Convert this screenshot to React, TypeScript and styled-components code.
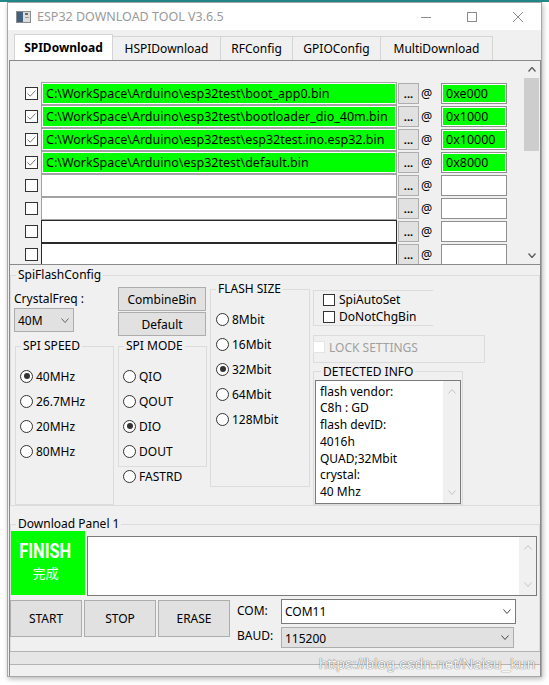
import React from "react";
import styled, { createGlobalStyle } from "styled-components";

const GlobalStyle = createGlobalStyle`
  * { box-sizing: border-box; }
  html, body { margin: 0; padding: 0; background: #ffffff; }
  body {
    font-family: "Noto Sans", "Noto Sans CJK SC", sans-serif;
    font-size: 12px;
    color: #000;
  }
`;

const Page = styled.div`
  position: relative;
  width: 549px;
  height: 685px;
  overflow: hidden;
  background: #fff;
`;

const TopStrip = styled.div`
  height: 2px;
  background: #23898d;
`;

const Window = styled.div`
  margin-left: 7px;
  width: 535px;
  height: 675px;
  border: 1px solid #a7a7a7;
  background: #f0f0f0;
  box-shadow: 1px 2px 5px rgba(0, 0, 0, 0.28);
  display: flex;
  flex-direction: column;
`;

const TitleBar = styled.div`
  height: 27px;
  flex-shrink: 0;
  background: #fff;
  display: flex;
  align-items: center;
  padding-left: 8px;
`;

const TitleText = styled.span`
  flex: 1;
  margin-left: 6px;
  font-size: 12.5px;
  color: #9a9a9a;
`;

const WinButton = styled.div`
  width: 46px;
  height: 27px;
  display: flex;
  align-items: center;
  justify-content: center;
`;

const TabBar = styled.div`
  height: 30px;
  flex-shrink: 0;
  display: flex;
  align-items: flex-end;
  padding-left: 6px;
`;

const Tab = styled.div<{ $active?: boolean; $w: number }>`
  width: ${({ $w }) => $w}px;
  height: ${({ $active }) => ($active ? 26 : 24)}px;
  margin-left: -1px;
  border: 1px solid #d4d4d4;
  border-bottom: none;
  background: ${({ $active }) => ($active ? "#ffffff" : "#f0f0f0")};
  font-weight: ${({ $active }) => ($active ? 700 : 400)};
  display: flex;
  align-items: center;
  justify-content: center;
  padding-bottom: 1px;

  &:first-child {
    margin-left: 0;
  }
`;

const TabPage = styled.div`
  flex: 1;
  margin-left: 1px;
  border: 1px solid #8a8a8a;
  border-bottom: none;
  display: flex;
  flex-direction: column;
  overflow: hidden;
`;

/* file list */

const FileList = styled.div`
  height: 204px;
  flex-shrink: 0;
  border-bottom: 1px solid #8a8a8a;
  display: flex;
  overflow: hidden;
`;

const Rows = styled.div`
  flex: 1;
  padding: 21px 0 0 15px;
  overflow: hidden;
`;

const FileRow = styled.div`
  height: 23px;
  display: flex;
  align-items: center;
`;

const Check = styled.span<{ $size?: number; $faint?: boolean }>`
  width: ${({ $size }) => $size ?? 13}px;
  height: ${({ $size }) => $size ?? 13}px;
  flex-shrink: 0;
  border: 1px solid ${({ $faint }) => ($faint ? "#e4e4e4" : "#333333")};
  background: #fff;
  display: flex;
  align-items: center;
  justify-content: center;
`;

const PathField = styled.div<{ $filled?: boolean; $dark?: boolean }>`
  width: 356px;
  height: 23px;
  margin-left: 3px;
  border: 1px solid ${({ $dark }) => ($dark ? "#2a2a2a" : "#a3a3a3")};
  box-shadow: inset 0 0 0 1px #ffffff;
  background: ${({ $filled }) => ($filled ? "#00ff00" : "#ffffff")};
  padding-left: 4px;
  font-size: 12.5px;
  line-height: 21px;
  white-space: nowrap;
  overflow: hidden;
`;

const DotsButton = styled.div`
  width: 21px;
  height: 21px;
  margin-left: 1px;
  border: 1px solid #adadad;
  background: #e1e1e1;
  font-weight: 700;
  font-size: 11px;
  line-height: 19px;
  text-align: center;
`;

const AtSign = styled.span`
  width: 22px;
  padding-left: 2px;
  font-size: 12.5px;
`;

const AddrField = styled.div<{ $filled?: boolean }>`
  width: 66px;
  height: 21px;
  border: 1px solid #8f8f8f;
  box-shadow: inset 0 0 0 1px #ffffff;
  background: ${({ $filled }) => ($filled ? "#00ff00" : "#ffffff")};
  padding-left: 4px;
  font-size: 12.5px;
  line-height: 19px;
`;

const ScrollBar = styled.div`
  width: 17px;
  flex-shrink: 0;
  display: flex;
  flex-direction: column;
  background: #f0f0f0;
`;

const ScrollArrow = styled.div`
  height: 17px;
  display: flex;
  align-items: center;
  justify-content: center;
`;

const ScrollTrack = styled.div`
  flex: 1;
`;

const ScrollThumb = styled.div`
  height: 73px;
  margin: 0 1px;
  background: #cdcdcd;
`;

/* group boxes */

const Group = styled.fieldset<{
  $mt?: number;
  $ml?: number;
  $w?: number;
  $grow?: boolean;
  $pb?: number;
  $noBottom?: boolean;
}>`
  margin: ${({ $mt }) => $mt ?? 0}px 0 0 ${({ $ml }) => $ml ?? 0}px;
  padding: 0 0 ${({ $pb }) => $pb ?? 0}px 0;
  min-width: 0;
  width: ${({ $w }) => ($w ? `${$w}px` : "auto")};
  flex: ${({ $grow }) => ($grow ? "1" : "none")};
  border: 1px solid #dcdcdc;
  border-bottom: ${({ $noBottom }) => ($noBottom ? "none" : "1px solid #dcdcdc")};
`;

const Legend = styled.legend<{ $ml?: number }>`
  margin-left: ${({ $ml }) => $ml ?? 5}px;
  padding: 0 2px;
  font-size: 12px;
  line-height: 14px;
`;

const Columns = styled.div`
  height: 223px;
  display: flex;
  padding-left: 3px;
`;

const Column = styled.div<{ $w: number; $ml?: number }>`
  width: ${({ $w }) => $w}px;
  margin-left: ${({ $ml }) => $ml ?? 0}px;
  display: flex;
  flex-direction: column;
  align-items: flex-start;
`;

const FieldLabel = styled.div`
  margin-top: 9px;
  line-height: 16px;
`;

const Combo = styled.div<{ $w: number; $h: number; $white?: boolean; $mt?: number }>`
  width: ${({ $w }) => $w}px;
  height: ${({ $h }) => $h}px;
  margin-top: ${({ $mt }) => $mt ?? 0}px;
  border: 1px solid ${({ $white }) => ($white ? "#7a7a7a" : "#adadad")};
  background: ${({ $white }) => ($white ? "#ffffff" : "#e1e1e1")};
  display: flex;
  align-items: center;
  justify-content: space-between;
  padding: 0 4px 0 3px;
`;

const Button = styled.div<{ $w: number; $h: number; $mt?: number }>`
  width: ${({ $w }) => $w}px;
  height: ${({ $h }) => $h}px;
  margin-top: ${({ $mt }) => $mt ?? 0}px;
  flex-shrink: 0;
  border: 1px solid #adadad;
  background: #e1e1e1;
  display: flex;
  align-items: center;
  justify-content: center;
`;

const RadioList = styled.div<{ $pl?: number }>`
  padding: 10.5px 0 0 ${({ $pl }) => $pl ?? 4}px;
`;

const RadioRow = styled.div<{ $h?: number; $pl?: number }>`
  height: ${({ $h }) => $h ?? 25}px;
  padding-left: ${({ $pl }) => $pl ?? 0}px;
  display: flex;
  align-items: center;
  gap: 3px;
  white-space: nowrap;
`;

const RadioDot = styled.span<{ $on?: boolean }>`
  width: 13px;
  height: 13px;
  flex-shrink: 0;
  border-radius: 50%;
  border: 1px solid #333;
  background: #fff;
  display: flex;
  align-items: center;
  justify-content: center;

  &::after {
    content: "";
    width: 6px;
    height: 6px;
    border-radius: 50%;
    background: ${({ $on }) => ($on ? "#333" : "transparent")};
  }
`;

const OptionsBox = styled.div`
  margin-top: 8px;
  width: 120px;
  height: 36px;
  border: 1px solid #dcdcdc;
  border-right: none;
  padding-left: 9px;
`;

const CheckRow = styled.div<{ $h?: number; $muted?: boolean }>`
  height: ${({ $h }) => $h ?? 17}px;
  display: flex;
  align-items: center;
  gap: 4px;
  color: ${({ $muted }) => ($muted ? "#a0a0a0" : "#000")};
`;

const LockBox = styled.div`
  margin-top: 9px;
  width: 172px;
  height: 28px;
  border: 1px solid #dcdcdc;
  padding-left: 0;

  & > div {
    margin-left: -1px;
  }
`;

const InfoBox = styled.div`
  margin: 1.5px 0 0 1px;
  width: 146px;
  height: 124px;
  border: 1px solid #7a7a7a;
  background: #fff;
  display: flex;
`;

const InfoText = styled.div`
  flex: 1;
  padding: 2.5px 0 0 4px;
  line-height: 16.8px;
`;

const InnerScroll = styled.div<{ $pad: number }>`
  width: 17px;
  background: #f0f0f0;
  display: flex;
  flex-direction: column;
  justify-content: space-between;
  align-items: center;
  padding: ${({ $pad }) => $pad}px 0;
`;

/* download panel */

const PanelTop = styled.div`
  height: 65px;
  display: flex;
  align-items: flex-start;
`;

const FinishBox = styled.div`
  width: 74px;
  height: 64px;
  background: #00ff00;
  color: #fff;
  display: flex;
  flex-direction: column;
  align-items: center;
  justify-content: center;
  padding: 0 5px 4px 0;
`;

const FinishText = styled.span`
  display: inline-block;
  font-family: Roboto, "Noto Sans", sans-serif;
  font-weight: 700;
  font-size: 21px;
  line-height: 20px;
  transform: scaleX(0.78);
`;

const FinishSub = styled.span`
  margin-top: 4px;
  font-family: "Noto Sans CJK SC", sans-serif;
  font-size: 13px;
  line-height: 16px;
`;

const LogBox = styled.div`
  margin: 5px 0 0 2px;
  width: 450px;
  height: 60px;
  border: 1px solid #7a7a7a;
  background: #fff;
  display: flex;
  justify-content: flex-end;
`;

const PanelBottom = styled.div`
  height: 49px;
  margin-top: 3px;
  display: flex;
  align-items: flex-start;
`;

const ButtonRow = styled.div`
  margin-left: -1px;
  display: flex;
  gap: 2px;
`;

const PortGrid = styled.div`
  margin-left: 7px;
  display: grid;
  grid-template-columns: 44px auto;
  grid-template-rows: 25px 21px;
  row-gap: 3px;
  align-items: center;
`;

const PortLabel = styled.span<{ $up?: number }>`
  position: relative;
  top: -${({ $up }) => $up ?? 1}px;
`;

const StatusBar = styled.div`
  height: 14px;
  flex-shrink: 0;
  border-top: 1px solid #b4b4b4;
  border-bottom: 1px solid #b4b4b4;
  background: #e6e6e6;
`;

const Watermark = styled.div`
  position: absolute;
  left: 319px;
  top: 655px;
  font-family: "Liberation Sans", Arial, sans-serif;
  font-size: 15.5px;
  color: #f6f6f6;
  text-shadow: 0 0 1px rgba(0, 0, 0, 0.55), 0 0 1px rgba(0, 0, 0, 0.35);
  pointer-events: none;
  white-space: nowrap;
`;

function Chevron({ dir = "down", color = "#444", w = 9, h = 5, sw = 1 }: {
  dir?: "up" | "down";
  color?: string;
  w?: number;
  h?: number;
  sw?: number;
}) {
  const d =
    dir === "down"
      ? `M0.5 0.5 L${w / 2} ${h - 0.5} L${w - 0.5} 0.5`
      : `M0.5 ${h - 0.5} L${w / 2} 0.5 L${w - 0.5} ${h - 0.5}`;
  return (
    <svg width={w} height={h} viewBox={`0 0 ${w} ${h}`}>
      <path d={d} fill="none" stroke={color} strokeWidth={sw} />
    </svg>
  );
}

function Tick() {
  return (
    <svg width="11" height="11" viewBox="0 0 11 11">
      <path d="M1.5 5.5 L4.2 8.2 L9.5 2.5" fill="none" stroke="#777" strokeWidth="1" />
    </svg>
  );
}

const tabs = [
  { label: "SPIDownload", w: 99, active: true },
  { label: "HSPIDownload", w: 109 },
  { label: "RFConfig", w: 73 },
  { label: "GPIOConfig", w: 89 },
  { label: "MultiDownload", w: 113 },
];

const base = "C:\\WorkSpace\\Arduino\\esp32test\\";
const files = [
  { path: base + "boot_app0.bin", addr: "0xe000" },
  { path: base + "bootloader_dio_40m.bin", addr: "0x1000" },
  { path: base + "esp32test.ino.esp32.bin", addr: "0x10000" },
  { path: base + "default.bin", addr: "0x8000" },
  { path: "", addr: "" },
  { path: "", addr: "" },
  { path: "", addr: "", dark: true },
  { path: "", addr: "", dark: true },
];

const speeds = [
  { label: "40MHz", on: true },
  { label: "26.7MHz" },
  { label: "20MHz" },
  { label: "80MHz" },
];

const modes = [{ label: "QIO" }, { label: "QOUT" }, { label: "DIO", on: true }, { label: "DOUT" }];

const sizes = [
  { label: "8Mbit" },
  { label: "16Mbit" },
  { label: "32Mbit", on: true },
  { label: "64Mbit" },
  { label: "128Mbit" },
];

const info = ["flash vendor:", "C8h : GD", "flash devID:", "4016h", "QUAD;32Mbit", "crystal:", "40 Mhz"];

export default function App() {
  return (
    <Page>
      <GlobalStyle />
      <TopStrip />
      <Window>
        <TitleBar>
          <svg width="15" height="12" viewBox="0 0 15 12">
            <rect x="0.5" y="0.5" width="14" height="11" fill="#dcdcdc" stroke="#8c8c8c" />
            <rect x="1" y="1" width="6" height="10" fill="#41607e" />
            <rect x="9" y="2" width="3" height="2" fill="#6a6a6a" />
            <rect x="9" y="6" width="4" height="1" fill="#9a9a9a" />
          </svg>
          <TitleText>ESP32 DOWNLOAD TOOL V3.6.5</TitleText>
          <WinButton>
            <svg width="10" height="10" viewBox="0 0 10 10">
              <path d="M0 5.5 H10" stroke="#8b8b8b" strokeWidth="1" />
            </svg>
          </WinButton>
          <WinButton>
            <svg width="10" height="10" viewBox="0 0 10 10">
              <rect x="0.5" y="0.5" width="9" height="9" fill="none" stroke="#8b8b8b" />
            </svg>
          </WinButton>
          <WinButton>
            <svg width="10" height="10" viewBox="0 0 10 10">
              <path d="M0 0 L10 10 M10 0 L0 10" stroke="#8b8b8b" strokeWidth="1" />
            </svg>
          </WinButton>
        </TitleBar>

        <TabBar>
          {tabs.map((t) => (
            <Tab key={t.label} $w={t.w} $active={t.active}>
              {t.label}
            </Tab>
          ))}
        </TabBar>

        <TabPage>
          <FileList>
            <Rows>
              {files.map((f, i) => (
                <FileRow key={i}>
                  <Check>{f.path && <Tick />}</Check>
                  <PathField $filled={!!f.path} $dark={f.dark}>
                    {f.path}
                  </PathField>
                  <DotsButton>...</DotsButton>
                  <AtSign>@</AtSign>
                  <AddrField $filled={!!f.addr}>{f.addr}</AddrField>
                </FileRow>
              ))}
            </Rows>
            <ScrollBar>
              <ScrollArrow>
                <Chevron dir="up" color="#606060" w={8} h={5} sw={1.4} />
              </ScrollArrow>
              <ScrollTrack>
                <ScrollThumb />
              </ScrollTrack>
              <ScrollArrow>
                <Chevron dir="down" color="#606060" w={8} h={5} sw={1.4} />
              </ScrollArrow>
            </ScrollBar>
          </FileList>

          <Group $mt={3}>
            <Legend>SpiFlashConfig</Legend>
            <Columns>
              <Column $w={100}>
                <FieldLabel>CrystalFreq :</FieldLabel>
                <Combo $w={60} $h={24} $mt={1}>
                  40M
                  <Chevron color="#666" w={8} h={5} />
                </Combo>
                <Group $mt={7} $ml={1} $w={99} $grow>
                  <Legend>SPI SPEED</Legend>
                  <RadioList>
                    {speeds.map((s) => (
                      <RadioRow key={s.label}>
                        <RadioDot $on={s.on} />
                        {s.label}
                      </RadioRow>
                    ))}
                  </RadioList>
                </Group>
              </Column>

              <Column $w={89} $ml={4}>
                <Button $w={88} $h={24} $mt={5}>
                  CombineBin
                </Button>
                <Button $w={88} $h={24} $mt={1}>
                  Default
                </Button>
                <Group $mt={3} $w={89} $pb={2}>
                  <Legend>SPI MODE</Legend>
                  <RadioList>
                    {modes.map((m) => (
                      <RadioRow key={m.label}>
                        <RadioDot $on={m.on} />
                        {m.label}
                      </RadioRow>
                    ))}
                  </RadioList>
                </Group>
                <RadioRow $h={20} $pl={5}>
                  <RadioDot />
                  FASTRD
                </RadioRow>
              </Column>

              <Column $w={100} $ml={3}>
                <Group $w={100} $pb={54}>
                  <Legend>FLASH SIZE</Legend>
                  <RadioList $pl={5}>
                    {sizes.map((s) => (
                      <RadioRow key={s.label}>
                        <RadioDot $on={s.on} />
                        {s.label}
                      </RadioRow>
                    ))}
                  </RadioList>
                </Group>
              </Column>

              <Column $w={172} $ml={3}>
                <OptionsBox>
                  <CheckRow>
                    <Check $size={12} />
                    SpiAutoSet
                  </CheckRow>
                  <CheckRow>
                    <Check $size={12} />
                    DoNotChgBin
                  </CheckRow>
                </OptionsBox>
                <LockBox>
                  <CheckRow $h={22} $muted>
                    <Check $size={12} $faint />
                    LOCK SETTINGS
                  </CheckRow>
                </LockBox>
                <Group $mt={2} $w={150} $grow>
                  <Legend $ml={7}>DETECTED INFO</Legend>
                  <InfoBox>
                    <InfoText>
                      {info.map((line) => (
                        <div key={line}>{line}</div>
                      ))}
                    </InfoText>
                    <InnerScroll $pad={8}>
                      <Chevron dir="up" color="#c4c4c4" w={8} h={5} />
                      <Chevron dir="down" color="#c4c4c4" w={8} h={5} />
                    </InnerScroll>
                  </InfoBox>
                </Group>
              </Column>
            </Columns>
          </Group>

          <Group $mt={11} $pb={3} $noBottom>
            <Legend>Download Panel 1</Legend>
            <PanelTop>
              <FinishBox>
                <FinishText>FINISH</FinishText>
                <FinishSub>完成</FinishSub>
              </FinishBox>
              <LogBox>
                <InnerScroll $pad={8}>
                  <Chevron dir="up" color="#c4c4c4" w={8} h={5} />
                  <Chevron dir="down" color="#c4c4c4" w={8} h={5} />
                </InnerScroll>
              </LogBox>
            </PanelTop>
            <PanelBottom>
              <ButtonRow>
                <Button $w={72} $h={37} $mt={1}>
                  START
                </Button>
                <Button $w={72} $h={37} $mt={1}>
                  STOP
                </Button>
                <Button $w={72} $h={37} $mt={1}>
                  ERASE
                </Button>
              </ButtonRow>
              <PortGrid>
                <PortLabel>COM:</PortLabel>
                <Combo $w={235} $h={25} $white>
                  COM11
                  <Chevron color="#444" w={8} h={5} />
                </Combo>
                <PortLabel $up={2}>BAUD:</PortLabel>
                <Combo $w={233} $h={21}>
                  <span style={{ paddingTop: 2 }}>115200</span>
                  <Chevron color="#444" w={8} h={5} />
                </Combo>
              </PortGrid>
            </PanelBottom>
          </Group>

          <StatusBar />
        </TabPage>
      </Window>
      <Watermark>https://blog.csdn.net/Naisu_kun</Watermark>
    </Page>
  );
}
